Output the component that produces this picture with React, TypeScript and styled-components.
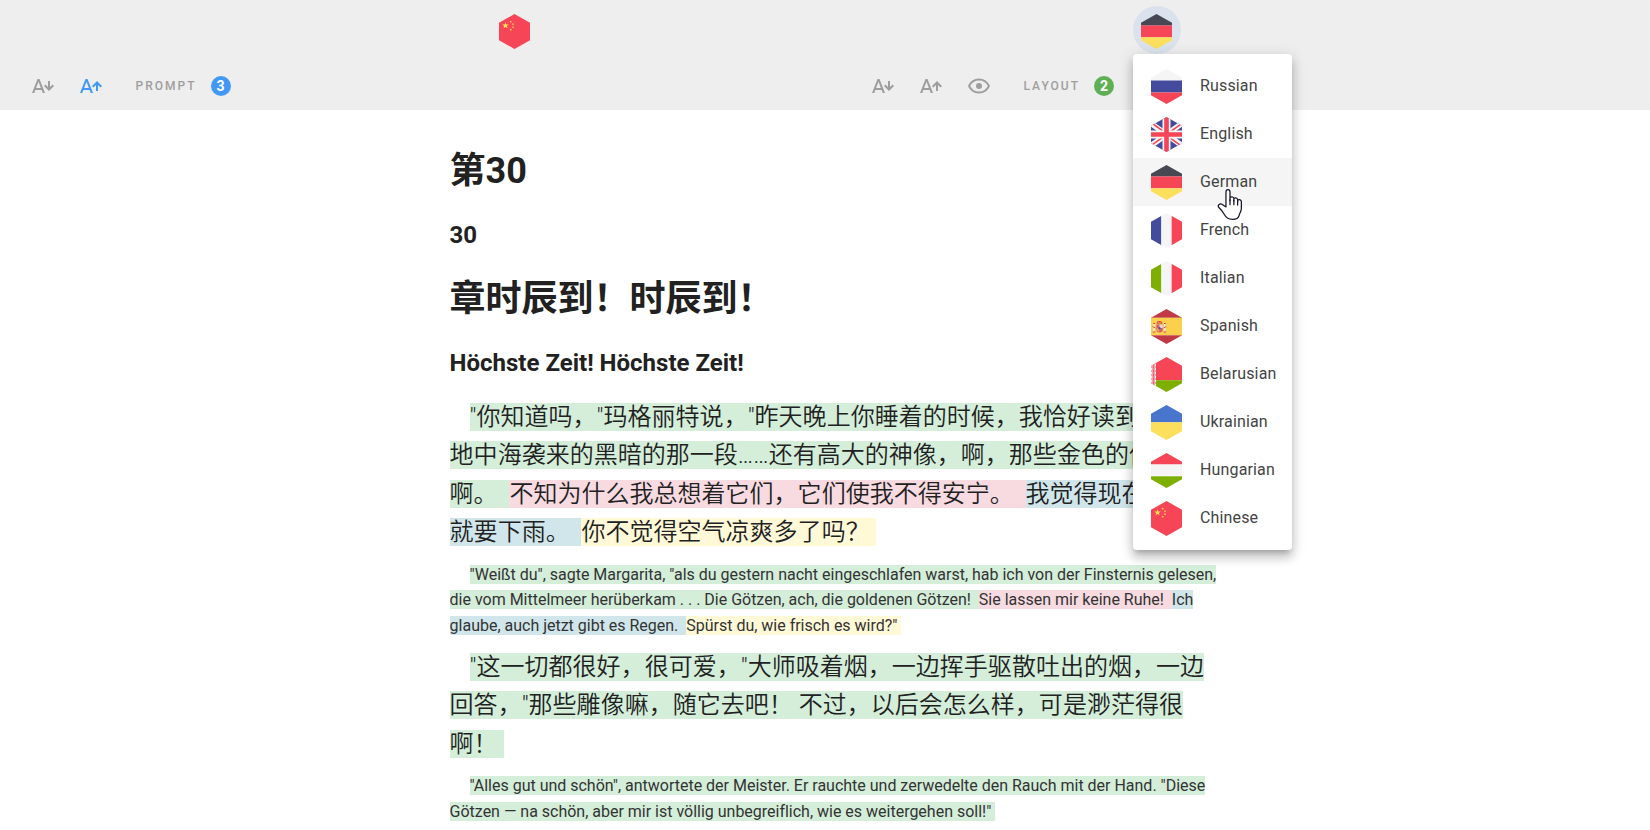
import React from 'react';
import styled, { createGlobalStyle } from 'styled-components';

const GlobalStyle = createGlobalStyle`
  *, *::before, *::after { box-sizing: border-box; }
  html, body { margin: 0; padding: 0; }
  body {
    background: #fff;
    color: #212121;
    font-family: Roboto, "Noto Sans CJK SC", sans-serif;
    overflow: hidden;
  }
`;

const Page = styled.div`
  position: relative;
  width: 1650px;
  height: 830px;
  overflow: hidden;
  background: #fff;
`;

const Header = styled.header`
  height: 110px;
  background: #eee;
`;

const LanguageBar = styled.div`
  display: flex;
  height: 60px;
  align-items: center;
`;

const LanguageSlot = styled.div<{ $width: number }>`
  display: flex;
  justify-content: flex-end;
  width: ${(p) => p.$width}px;
`;

const LanguageButton = styled.button<{ $active?: boolean }>`
  display: flex;
  align-items: center;
  justify-content: center;
  width: 48px;
  height: 48px;
  padding: 3px 1px 0 0;
  border: 0;
  border-radius: 50%;
  background: ${(p) => (p.$active ? '#dae3ed' : 'transparent')};
`;

const ToolBar = styled.div`
  display: flex;
  height: 50px;
`;

const ToolGroup = styled.div<{ $width: number }>`
  display: flex;
  align-items: center;
  width: ${(p) => p.$width}px;
  height: 52px;
  padding-left: 19px;
`;

const ToolButton = styled.button<{ $active?: boolean }>`
  display: flex;
  align-items: center;
  justify-content: center;
  width: 48px;
  height: 48px;
  padding: 0;
  border: 0;
  background: transparent;
  color: ${(p) => (p.$active ? '#4298f5' : '#9e9e9e')};
`;

const ToolLabel = styled.span<{ $width: number }>`
  width: ${(p) => p.$width}px;
  margin-left: 20.5px;
  color: #9e9e9e;
  font-size: 12px;
  font-weight: 500;
  letter-spacing: 2px;
  line-height: 20px;
  white-space: nowrap;
`;

const Badge = styled.span<{ $color: string }>`
  display: flex;
  align-items: center;
  justify-content: center;
  width: 20px;
  height: 20px;
  border-radius: 50%;
  background: ${(p) => p.$color};
  color: #fff;
  font-size: 14px;
  font-weight: 700;
  line-height: 20px;
`;

const Book = styled.main`
  width: 780px;
  margin-left: 449.6px;
  padding-top: 33px;
`;

const Title = styled.h1`
  margin: 0;
  font-size: 36px;
  font-weight: 700;
  line-height: 57.6px;
  white-space: nowrap;
`;

const Subtitle = styled.h2`
  margin: 10.5px 0 12px;
  font-size: 24px;
  font-weight: 700;
  line-height: 48px;
  white-space: nowrap;

  &:last-of-type {
    margin-bottom: 10.5px;
  }
`;

const Original = styled.p`
  margin: 0 0 10.5px;
  font-size: 24px;
  font-weight: 350;
  letter-spacing: 0.02px;
  line-height: 38.4px;
  text-indent: 20px;
  white-space: nowrap;
`;

const Translation = styled.p`
  margin: 0 0 9.1px;
  color: #333;
  font-size: 16px;
  font-weight: 400;
  letter-spacing: -0.008px;
  line-height: 25.6px;
  text-indent: 20px;
  white-space: nowrap;
`;

const tones = {
  green: '#d4eeda',
  pink: '#f7dbe1',
  blue: '#d0e6eb',
  yellow: '#fff9d8',
};

const Mark = styled.span<{ $tone: keyof typeof tones }>`
  background: ${(p) => tones[p.$tone]};
`;

const Menu = styled.ul`
  position: absolute;
  left: 1133px;
  top: 54px;
  width: 159px;
  height: 496px;
  margin: 0;
  padding: 8px 0;
  list-style: none;
  border-radius: 4px;
  background: #fff;
  box-shadow: 0 5px 5px -3px rgba(0, 0, 0, 0.2), 0 8px 10px 1px rgba(0, 0, 0, 0.14),
    0 3px 14px 2px rgba(0, 0, 0, 0.12);
`;

const MenuItem = styled.li<{ $hover?: boolean }>`
  display: flex;
  align-items: center;
  gap: 18px;
  height: 48px;
  padding: 0 0 0 18px;
  background: ${(p) => (p.$hover ? '#f5f5f5' : 'transparent')};
  color: #444;
  font-size: 16px;
  letter-spacing: 0.15px;
`;

const MenuText = styled.span`
  padding-bottom: 2px;
`;

const FlagSvg = styled.svg`
  display: block;
  flex: none;
  width: 31px;
  height: 35px;
  clip-path: polygon(50% 0, 100% 25%, 100% 75%, 50% 100%, 0 75%, 0 25%);
`;

const MenuFlag = styled.span`
  display: block;
  padding-top: 1px;
`;

const Cursor = styled.svg`
  position: absolute;
  left: 1216.5px;
  top: 187.5px;
  width: 26px;
  height: 33px;
`;

type Code = 'ru' | 'en' | 'de' | 'fr' | 'it' | 'es' | 'be' | 'uk' | 'hu' | 'zh';

const rows = (colors: string[], cuts: number[]) =>
  colors.map((c, i) => (
    <rect key={i} x="0" width="31" y={cuts[i]} height={cuts[i + 1] - cuts[i]} fill={c} />
  ));

const columns = (colors: string[]) =>
  colors.map((c, i) => <rect key={i} y="0" height="35" x={i * 10.33} width="10.4" fill={c} />);

const star = (cx: number, cy: number, r: number) => {
  const pts: string[] = [];
  for (let i = 0; i < 10; i += 1) {
    const a = -Math.PI / 2 + (i * Math.PI) / 5;
    const k = i % 2 ? r * 0.42 : r;
    pts.push(`${(cx + k * Math.cos(a)).toFixed(2)},${(cy + k * Math.sin(a)).toFixed(2)}`);
  }
  return <polygon key={`${cx}-${cy}`} points={pts.join(' ')} fill="#ffe15a" />;
};

const RED = '#f54556';
const NAVY = '#454b9c';
const WHITE = '#f5f5f5';
const GREEN = '#7caf00';

const art: Record<Code, React.ReactNode> = {
  ru: rows([WHITE, NAVY, RED], [0, 11.5, 23.5, 35]),
  de: rows(['#484854', RED, '#fcdf5c'], [0, 11.5, 23.3, 35]),
  hu: rows([RED, WHITE, GREEN], [0, 11.5, 23.3, 35]),
  uk: rows(['#4876cd', '#fcdf5c'], [0, 17.3, 35]),
  fr: columns([NAVY, WHITE, RED]),
  it: columns([GREEN, WHITE, RED]),
  en: (
    <>
      <rect width="31" height="35" fill={NAVY} />
      <path d="M-4 3.5 35 31.5M35 3.5-4 31.5" stroke={WHITE} strokeWidth="5.4" />
      <path d="M-4 2.7 15.5 16.7M35 3.5 15.5 17.5M35 32.3 15.5 18.3M-4 31.5 15.5 17.5" stroke={RED} strokeWidth="1.6" />
      <path d="M15.5 0V35M0 17.5H31" stroke={WHITE} strokeWidth="8" />
      <path d="M15.5 0V35M0 17.5H31" stroke={RED} strokeWidth="4.6" />
    </>
  ),
  es: (
    <>
      {rows(['#c03a46', '#fbd04d', '#c03a46'], [0, 8.8, 26.3, 35])}
      <path d="M3 14.5V23M13.8 14.5V23" stroke="#efe6e0" strokeWidth="1.6" />
      <path d="M1.6 17.5 4.3 19M12.6 19 15.2 17.5M1.8 23H4.4M12.6 23H15.2M2.2 14.5H4M13 14.5H14.8" stroke="#d2464f" strokeWidth="1" />
      <path d="M5.3 15.5H11.7V20.5A3.2 3 0 0 1 5.3 20.5Z" fill="#d5606a" />
      <path d="M8.5 15.5H11.7V19H8.5Z" fill="#ecd8d8" />
      <path d="M5.6 19.2H8.4V22.8Q6 22.4 5.6 20Z" fill="#f0b14b" />
      <path d="M8.6 19.6H11.5V20.5Q11 22.6 8.6 23Z" fill="#d5606a" />
      <circle cx="8.5" cy="19.2" r="1.2" fill="#4c5aa8" />
      <path d="M5.8 14.7Q5.2 12 8.5 12Q11.8 12 11.2 14.7Z" fill="#c7434b" />
      <path d="M6.7 13.7H10.3" stroke="#fbd04d" strokeWidth=".7" />
    </>
  ),
  be: (
    <>
      {rows([RED, GREEN], [0, 23.2, 35])}
      <rect width="5" height="35" fill={WHITE} />
      <path
        d="M.5 6 4.5 10 .5 14 4.5 18 .5 22 4.5 26 .5 30M4.5 6 .5 10 4.5 14 .5 18 4.5 22 .5 26 4.5 30M2.5 5V7M2.5 9V11M2.5 13V15M2.5 17V19M2.5 21V23M2.5 25V27"
        fill="none"
        stroke={RED}
        strokeWidth=".9"
      />
    </>
  ),
  zh: (
    <>
      <rect width="31" height="35" fill={RED} />
      {star(6.5, 11.6, 3.4)}
      {star(11.7, 7.8, 1.3)}
      {star(14, 10.2, 1.3)}
      {star(14, 13.3, 1.3)}
      {star(11.7, 15.8, 1.3)}
    </>
  ),
};

const Flag = ({ code }: { code: Code }) => (
  <FlagSvg viewBox="0 0 31 35" aria-hidden="true">
    {art[code]}
  </FlagSvg>
);

const SizeIcon = ({ up }: { up?: boolean }) => (
  <svg width="24" height="24" viewBox="0 0 24 24" fill="currentColor" aria-hidden="true">
    <path d="M5.12 14 7.5 7.67 9.87 14M6.5 5 1 19h2.25l1.12-3h6.25l1.13 3H14L8.5 5h-2Z" />
    {up ? (
      <path d="m18 7-5 5.07 1.41 1.43L17 10.9V17h2v-6.1l2.59 2.6L23 12.07 18 7Z" />
    ) : (
      <path d="m18 17 5-5.07-1.41-1.43L19 13.1V7h-2v6.1l-2.59-2.6L13 11.93 18 17Z" />
    )}
  </svg>
);

const EyeIcon = () => (
  <svg width="24" height="24" viewBox="0 0 24 24" fill="currentColor" aria-hidden="true">
    <path d="M12 9a3 3 0 1 1 0 6 3 3 0 0 1 0-6m0-4.5c5 0 9.27 3.11 11 7.5-1.73 4.39-6 7.5-11 7.5S2.73 16.39 1 12c1.73-4.39 6-7.5 11-7.5M3.18 12a9.82 9.82 0 0 0 17.64 0A9.82 9.82 0 0 0 3.18 12Z" />
  </svg>
);

const languages: { code: Code; name: string }[] = [
  { code: 'ru', name: 'Russian' },
  { code: 'en', name: 'English' },
  { code: 'de', name: 'German' },
  { code: 'fr', name: 'French' },
  { code: 'it', name: 'Italian' },
  { code: 'es', name: 'Spanish' },
  { code: 'be', name: 'Belarusian' },
  { code: 'uk', name: 'Ukrainian' },
  { code: 'hu', name: 'Hungarian' },
  { code: 'zh', name: 'Chinese' },
];

export default function App() {
  return (
    <Page>
      <GlobalStyle />
      <Header>
        <LanguageBar>
          <LanguageSlot $width={539}>
            <LanguageButton aria-label="Book language">
              <Flag code="zh" />
            </LanguageButton>
          </LanguageSlot>
          <LanguageSlot $width={642}>
            <LanguageButton $active aria-label="Translation language">
              <Flag code="de" />
            </LanguageButton>
          </LanguageSlot>
        </LanguageBar>
        <ToolBar>
          <ToolGroup $width={840}>
            <ToolButton aria-label="Smaller"><SizeIcon /></ToolButton>
            <ToolButton $active aria-label="Larger"><SizeIcon up /></ToolButton>
            <ToolLabel $width={75}>PROMPT</ToolLabel>
            <Badge $color="#4298f5">3</Badge>
          </ToolGroup>
          <ToolGroup $width={810}>
            <ToolButton aria-label="Smaller"><SizeIcon /></ToolButton>
            <ToolButton aria-label="Larger"><SizeIcon up /></ToolButton>
            <ToolButton aria-label="Visibility"><EyeIcon /></ToolButton>
            <ToolLabel $width={70.5}>LAYOUT</ToolLabel>
            <Badge $color="#5fb054">2</Badge>
          </ToolGroup>
        </ToolBar>
      </Header>

      <Book>
        <Title>第30</Title>
        <Subtitle>30</Subtitle>
        <Title>章时辰到！时辰到！</Title>
        <Subtitle>Höchste Zeit! Höchste Zeit!</Subtitle>

        <Original>
          <Mark $tone="green">
            "你知道吗，"玛格丽特说，"昨天晚上你睡着的时候，我恰好读到从
            <br />
            地中海袭来的黑暗的那一段……还有高大的神像，啊，那些金色的偶像
            <br />
            啊。&nbsp;&nbsp;
          </Mark>
          <Mark $tone="pink">不知为什么我总想着它们，它们使我不得安宁。&nbsp;&nbsp;</Mark>
          <Mark $tone="blue">
            我觉得现在马上
            <br />
            就要下雨。&nbsp;&nbsp;
          </Mark>
          <Mark $tone="yellow">你不觉得空气凉爽多了吗？&nbsp;</Mark>
        </Original>
        <Translation>
          <Mark $tone="green">
            "Weißt du", sagte Margarita, "als du gestern nacht eingeschlafen warst, hab ich von der Finsternis gelesen,
            <br />
            die vom Mittelmeer herüberkam . . . Die Götzen, ach, die goldenen Götzen!&nbsp;&nbsp;
          </Mark>
          <Mark $tone="pink">Sie lassen mir keine Ruhe!&nbsp;&nbsp;</Mark>
          <Mark $tone="blue">
            Ich
            <br />
            glaube, auch jetzt gibt es Regen.&nbsp;&nbsp;
          </Mark>
          <Mark $tone="yellow">Spürst du, wie frisch es wird?"&nbsp;</Mark>
        </Translation>
        <Original>
          <Mark $tone="green">
            "这一切都很好，很可爱，"大师吸着烟，一边挥手驱散吐出的烟，一边
            <br />
            回答，"那些雕像嘛，随它去吧！ 不过，以后会怎么样，可是渺茫得很
            <br />
            啊！&nbsp;
          </Mark>
        </Original>
        <Translation>
          <Mark $tone="green">
            "Alles gut und schön", antwortete der Meister. Er rauchte und zerwedelte den Rauch mit der Hand. "Diese
            <br />
            Götzen — na schön, aber mir ist völlig unbegreiflich, wie es weitergehen soll!"&nbsp;
          </Mark>
        </Translation>
      </Book>

      <Menu>
        {languages.map(({ code, name }) => (
          <MenuItem key={code} $hover={code === 'de'}>
            <MenuFlag><Flag code={code} /></MenuFlag>
            <MenuText>{name}</MenuText>
          </MenuItem>
        ))}
      </Menu>

      <Cursor viewBox="0 0 27 34" aria-hidden="true">
        <path
          d="M9.3 19.5V4.2C9.3 .8 13.5 .8 13.5 4.2V13V10.6C13.7 8.3 17.3 8.5 17.5 10.8V13.5V11.5C17.8 9.5 21.2 9.8 21.4 12V14.5V13C21.8 11.3 25 11.5 25.3 13.8V21C25.3 24.5 23.4 25.8 23 28.2C22.3 31.2 19.8 32.4 16 32.4C11.5 32.4 9.3 30.5 7.8 27.7C6.2 24.8 4.4 22.4 1.8 19.9C.2 17.6 3.2 15.2 5.5 16.9Z"
          fill="#fff"
          stroke="#16162a"
          strokeWidth="1.3"
          strokeLinejoin="round"
        />
        <path d="M13.5 12V17.2M17.5 12.5V17.2M21.4 13.5V17.6" stroke="#16162a" strokeWidth="1.3" strokeLinecap="round" />
      </Cursor>
    </Page>
  );
}
